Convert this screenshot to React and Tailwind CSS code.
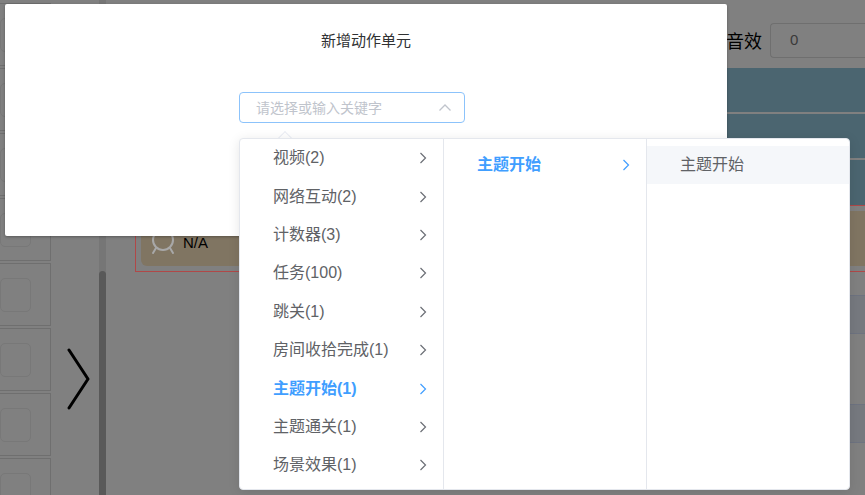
import React from 'react'

const level1 = [
  { label: '视频(2)' },
  { label: '网络互动(2)' },
  { label: '计数器(3)' },
  { label: '任务(100)' },
  { label: '跳关(1)' },
  { label: '房间收拾完成(1)' },
  { label: '主题开始(1)', active: true },
  { label: '主题通关(1)' },
  { label: '场景效果(1)' },
]

function Chevron({ active }) {
  return (
    <svg width="10" height="14" viewBox="0 0 10 14" fill="none" className="shrink-0">
      <path d="M2.5 2 L7.5 7 L2.5 12" stroke={active ? '#409eff' : '#6b6e75'} strokeWidth="1.2" />
    </svg>
  )
}

function MenuItem({ label, active, hasChildren = true, highlight }) {
  return (
    <div
      className={`h-[38.4px] flex items-center justify-between pl-[33px] pr-[15px] text-[16px] ${
        active ? 'text-[#409eff] font-bold' : 'text-[#606266]'
      } ${highlight ? 'bg-[#f5f7fa]' : ''}`}
    >
      <span>{label}</span>
      {hasChildren && <Chevron active={active} />}
    </div>
  )
}

function SideCell() {
  return (
    <div className="shrink-0 h-[63px] mb-[2px] border border-l-0 border-[#6f6f6f] flex items-center justify-end pr-[19px]">
      <div className="w-[40px] h-[34px] rounded-[5px] border border-[#787878]"></div>
    </div>
  )
}

export default function App() {
  return (
    <div
      className="relative w-[865px] h-[495px] overflow-hidden bg-[#808080]"
      style={{ fontFamily: '"Liberation Sans", "Noto Sans CJK SC", sans-serif' }}
    >
      {/* Background page (dimmed by mask) */}
      <div className="flex h-full">
        {/* Left list */}
        <div className="w-[51px] shrink-0 pt-[3px] flex flex-col overflow-hidden">
          <SideCell />
          <SideCell />
          <SideCell />
          <SideCell />
          <SideCell />
          <SideCell />
          <SideCell />
          <SideCell />
        </div>

        {/* Toggle arrow */}
        <div className="w-[48px] shrink-0 flex items-center justify-center pt-[265px] pl-[8px]">
          <svg width="26" height="64" viewBox="0 0 26 64" fill="none">
            <path d="M3 2 L22 31 L3 60" stroke="#000" strokeWidth="3" strokeLinecap="round" strokeLinejoin="round" />
          </svg>
        </div>

        {/* Scrollbar */}
        <div className="w-[7px] shrink-0 bg-[#767676] flex flex-col pt-[271px]">
          <div className="flex-1 bg-[#595959] rounded-t-[4px]"></div>
        </div>

        {/* Main content */}
        <div className="flex-1 flex flex-col pl-[29px]">
          <div className="h-[68px] shrink-0 flex items-start justify-end pt-[23px] gap-[8px]">
            <span className="text-[18px] leading-[35px] text-black" style={{ fontFamily: '"Noto Sans CJK SC", sans-serif' }}>音效</span>
            <div className="w-[95px] h-[35px] rounded-l-[4px] border border-r-0 border-[#6f6f6f] pl-[19px] flex items-center text-[15px] text-[#3a3a3a]">
              0
            </div>
          </div>
          <div className="h-[44px] shrink-0 bg-[#4b6570]"></div>
          <div className="h-[2px] shrink-0"></div>
          <div className="h-[44px] shrink-0 bg-[#4b6570]"></div>
          <div className="h-[2px] shrink-0"></div>
          <div className="h-[45px] shrink-0 bg-[#4b6570]"></div>
          <div className="h-[67px] shrink-0 border border-r-0 border-[#b04848] p-[5px] pr-0">
            <div className="h-full bg-[#807562] rounded-l-[6px] flex items-end pl-[8px] pb-[10px] gap-[6px]">
              <svg width="28" height="28" viewBox="0 0 28 28" fill="none">
                <circle cx="14" cy="12" r="10" stroke="#a8a8a8" strokeWidth="2" />
                <path d="M7 20 L4 25 M21 20 L24 25" stroke="#a8a8a8" strokeWidth="2" strokeLinecap="round" />
              </svg>
              <span className="text-[15px] text-black leading-[18px] mb-[4px]">N/A</span>
            </div>
          </div>
          <div className="h-[23px] shrink-0"></div>
          <div className="ml-auto w-[300px] h-[39px] shrink-0 bg-[#76797f] border-y border-[#6e7380]"></div>
          <div className="h-[70px] shrink-0"></div>
          <div className="ml-auto w-[300px] h-[39px] shrink-0 bg-[#76797f] border-y border-[#6e7380]"></div>
        </div>
      </div>

      {/* Dialog */}
      <div className="absolute left-[5px] top-[4px] w-[722px] h-[232px] bg-white rounded-[2px] shadow-[0_1px_3px_rgba(0,0,0,0.3)]">
        <div className="pt-[26px] text-center text-[15px] leading-[20px] text-[#303133]" style={{ fontFamily: '"Noto Sans CJK SC", sans-serif' }}>
          新增动作单元
        </div>
        <div className="mt-[42px] ml-[234px] w-[226px] h-[31px] rounded-[4px] border border-[#8cc3fb] flex items-center justify-between pl-[16px] pr-[12px]">
          <span className="text-[14px] text-[#c0c4cc]" style={{ fontFamily: '"Noto Sans CJK SC", sans-serif' }}>请选择或输入关键字</span>
          <svg width="14" height="9" viewBox="0 0 14 9" fill="none">
            <path d="M1.5 7.5 L7 2 L12.5 7.5" stroke="#c0c4cc" strokeWidth="1.3" />
          </svg>
        </div>
      </div>

      {/* Cascader popper */}
      <div className="absolute left-[280px] top-[133px] w-[10px] h-[10px] bg-white rotate-45 border-l border-t border-[#ebeef5]"></div>
      <div className="absolute left-[239px] top-[138px] w-[611px] h-[352px] bg-white rounded-[4px] border border-[#e4e7ed] shadow-[0_2px_12px_rgba(0,0,0,0.1)] flex overflow-hidden">
        <div className="w-[204px] border-r border-[#e4e7ed]">
          {level1.map((it) => (
            <MenuItem key={it.label} label={it.label} active={it.active} />
          ))}
        </div>
        <div className="w-[203px] border-r border-[#e4e7ed] pt-[7px]">
          <MenuItem label="主题开始" active />
        </div>
        <div className="flex-1 pt-[7px]">
          <MenuItem label="主题开始" hasChildren={false} highlight />
        </div>
      </div>
    </div>
  )
}
